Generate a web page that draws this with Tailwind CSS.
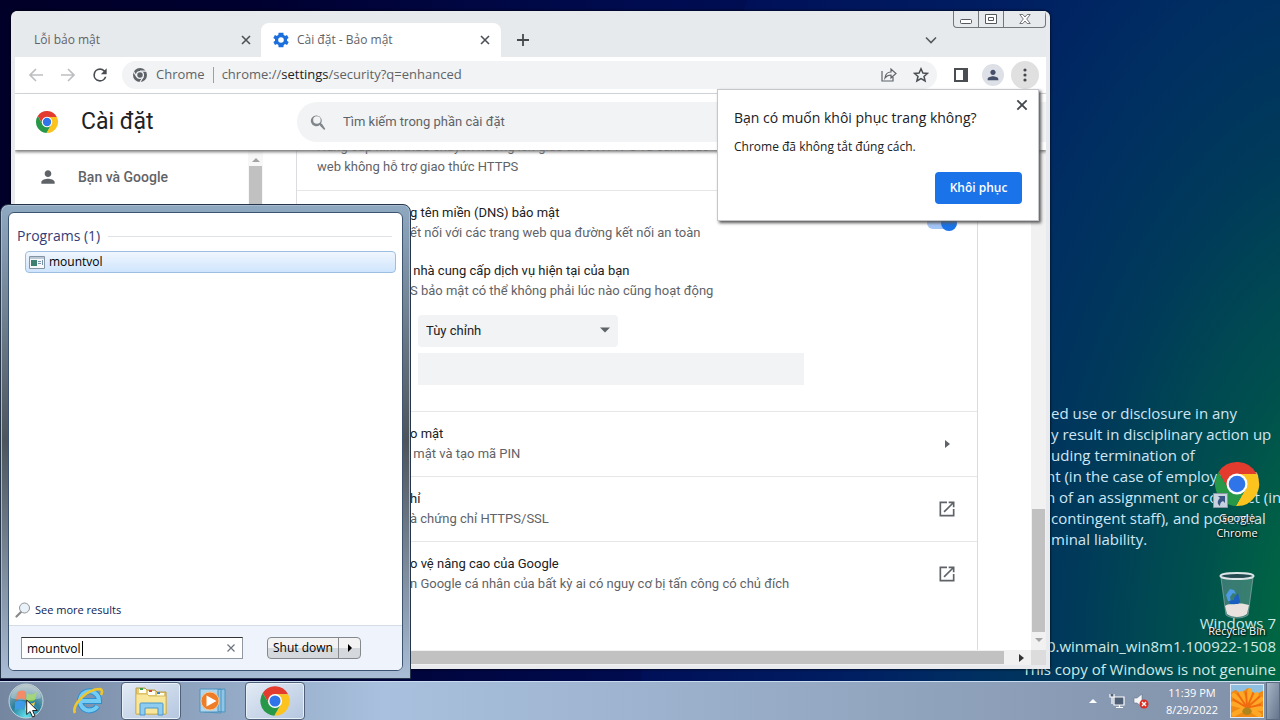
<!DOCTYPE html>
<html lang="vi">
  <head>
    <meta charset="UTF-8" />
    <meta name="viewport" content="width=device-width, initial-scale=1.0" />
    <title>Cài đặt - Bảo mật</title>
    <script src="https://cdn.jsdelivr.net/npm/@tailwindcss/browser@4"></script>
  </head>
  <body class="h-screen overflow-hidden flex flex-col font-['Open_Sans','Noto_Sans',sans-serif] text-xs text-black">
    <!-- shared icons -->
    <svg class="hidden">
      <symbol id="chrome-logo" viewBox="0 0 48 48">
        <path fill="#e33b2e" d="M24 24 15.34 29 5.54 12.03A22 22 0 0 1 43.6 14H24z" />
        <path fill="#fcc31e" d="M24 24V14H43.6A22 22 0 0 1 22.86 45.97L32.66 29z" />
        <path fill="#279847" d="M24 24 32.66 29 22.86 45.97A22 22 0 0 1 5.54 12.03L15.34 29z" />
        <circle cx="24" cy="24" r="10.5" fill="#fff" />
        <circle cx="24" cy="24" r="8.3" fill="#2f74e8" />
      </symbol>
      <symbol id="close" viewBox="0 0 12 12">
        <path d="M2 2l8 8M10 2l-8 8" fill="none" stroke="currentColor" stroke-width="1.6" />
      </symbol>
      <symbol id="person" viewBox="0 0 24 24">
        <path fill="currentColor" d="M12 12c2.21 0 4-1.79 4-4s-1.79-4-4-4-4 1.79-4 4 1.79 4 4 4zm0 2c-2.67 0-8 1.34-8 4v2h16v-2c0-2.66-5.33-4-8-4z" />
      </symbol>
      <symbol id="external" viewBox="0 0 24 24">
        <path fill="currentColor" d="M19 19H5V5h7V3H3v18h18v-9h-2v7zM14 3v2h3.59l-9.83 9.83 1.41 1.41L19 6.41V10h2V3h-7z" />
      </symbol>
    </svg>

    <main class="relative flex-1 min-h-0 overflow-hidden bg-[radial-gradient(ellipse_740px_1300px_at_108%_98%,#007038_0%,#006a40_12%,#00504e_26%,#003a5a_42%,#002e62_56%,#001e62_72%,#001058_100%,transparent_100%),linear-gradient(90deg,#000028_0%,#000030_20%,#000c50_50%,#001058_100%)]">
      <!-- wallpaper text -->
      <div class="absolute left-[1046px] top-[403px] text-[15px] leading-[21px] whitespace-nowrap text-[#cfe6f5]">
        <p class="pl-[5px]">ed use or disclosure in any</p>
        <p class="pl-[5px]">y result in disciplinary action up</p>
        <p class="pl-[5px]">uding termination of</p>
        <p>nt (in the case of employment)</p>
        <p>n of an assignment or contract (in</p>
        <p class="pl-[5px]">contingent staff), and potential</p>
        <p class="pl-[5px]">minal liability.</p>
      </div>
      <div class="absolute right-1 bottom-0 text-right text-[15px] leading-[23px] whitespace-nowrap text-[#cfeae6]">
        <p>Windows 7</p>
        <p>50.winmain_win8m1.100922-1508</p>
        <p>This copy of Windows is not genuine</p>
      </div>

      <!-- desktop icons -->
      <a href="#" class="absolute right-2 top-[460px] w-[70px] flex flex-col items-center text-center text-[11px] leading-[15px] text-white [text-shadow:1px_1px_2px_#000,0_0_2px_#000]">
        <span class="relative">
          <svg class="w-12 h-12"><use href="#chrome-logo" /></svg>
          <svg class="absolute left-0 bottom-0 w-[15px] h-[15px]" viewBox="0 0 15 15">
            <path fill="#c8d2de" stroke="#8a97a6" d="M.5.5h14v14H.5z" />
            <path fill="#3a5684" d="M5 3h7v7l-2-2c-2 1-3 2-3 5-3-2-3-5 0-8z" />
          </svg>
        </span>
        <span class="pt-[2px]">Google<br />Chrome</span>
      </a>
      <a href="#" class="absolute right-2 top-[571px] w-[70px] flex flex-col items-center text-center text-[11px] leading-[15px] whitespace-nowrap text-white [text-shadow:1px_1px_2px_#000,0_0_2px_#000]">
        <svg class="w-10 h-[52px]" viewBox="0 0 40 52">
          <path fill="#b8cdd0" fill-opacity=".3" stroke="#9fb3b5" stroke-opacity=".6" d="M4 7l5 37c5 4 17 4 22 0l5-37z" />
          <ellipse cx="20" cy="5" rx="16.5" ry="3" fill="#345" fill-opacity=".7" stroke="#dce6e8" stroke-width="2" />
          <path fill="#e9e2df" d="M8 35c4-3 7-1 11-2s9 0 13 1l-2 9c-5 4-15 4-20 0z" />
          <path fill="#4d9be6" d="M9 24l4-6 4 1 2 4-3-1-3 4 1 5-3-1z" />
          <path fill="#1c5fc2" d="M17 27l4-5 2 9-2 2h-8l-1-3 5-1z" />
        </svg>
        <span>Recycle Bin</span>
      </a>

      <!-- browser window -->
      <section class="absolute left-[11px] right-[230px] top-[11px] bottom-3 flex flex-col overflow-hidden rounded-t-md border-x-4 border-b-4 border-[#e8eaed] bg-white shadow-[0_0_3px_#000]">
        <header class="flex h-[46px] shrink-0 items-end bg-[#e7eaed] text-[#5f6368]">
          <div class="flex h-[34px] w-[246px] items-center pl-[19px] pr-[9px]">
            <span class="flex-1">Lỗi bảo mật</span>
            <button aria-label="Đóng thẻ" class="text-[#4d5156]"><svg class="w-3 h-3"><use href="#close" /></svg></button>
          </div>
          <div class="flex h-[34px] w-[240px] items-center rounded-t-lg bg-white pl-3 pr-[10px]">
            <svg class="w-4 h-4" viewBox="2 2 20 20"><path fill="#1a6fdc" fill-rule="evenodd" d="M19.4 13c0-.3.1-.6.1-1s0-.7-.1-1l2.1-1.6-2-3.5-2.5 1c-.5-.4-1.1-.7-1.7-1L15 3H9l-.4 2.9c-.6.2-1.1.6-1.7 1l-2.5-1-2 3.5L4.6 11c0 .3-.1.6-.1 1s0 .7.1 1l-2.1 1.6 2 3.5 2.5-1c.5.4 1.1.7 1.7 1L9 21h6l.4-2.9c.6-.2 1.1-.6 1.7-1l2.5 1 2-3.5zM12 15.5a3.5 3.5 0 1 1 0-7 3.5 3.5 0 0 1 0 7z" /></svg>
            <span class="flex-1 pl-2">Cài đặt - Bảo mật</span>
            <button aria-label="Đóng thẻ" class="text-[#4d5156]"><svg class="w-3 h-3"><use href="#close" /></svg></button>
          </div>
          <button aria-label="Thẻ mới" class="flex h-[34px] w-11 items-center justify-center">
            <svg class="w-3 h-3" viewBox="0 0 12 12"><path d="M6 0v12M0 6h12" stroke="#45494d" stroke-width="1.8" /></svg>
          </button>
          <div class="ml-auto flex h-full flex-col items-end">
            <div class="flex h-[17px] rounded-b border border-t-0 border-[#73777c]">
              <button aria-label="Thu nhỏ" class="flex w-[25px] items-center justify-center border-r border-[#73777c] pt-1"><svg class="w-3 h-[5px]" viewBox="0 0 12 5"><rect x=".5" y=".5" width="11" height="4" rx="1" fill="#fff" stroke="#55585c" /></svg></button>
              <button aria-label="Phóng to" class="flex w-[25px] items-center justify-center border-r border-[#73777c]"><svg class="w-3 h-[10px]" viewBox="0 0 12 10"><path d="M.5.5h11v9H.5zM3.5 3.5h5v3h-5z" fill="#fff" stroke="#55585c" /></svg></button>
              <button aria-label="Đóng" class="flex w-[41px] items-center justify-center"><svg class="w-3 h-[10px]" viewBox="0 0 12 10"><path d="M.8.5h3L6 3 8.2.5h3L7.7 5l3.5 4.5h-3L6 7 3.8 9.5h-3L4.3 5z" fill="#fff" stroke="#55585c" stroke-width=".8" /></svg></button>
            </div>
            <button aria-label="Tìm thẻ" class="mr-[109px] mt-2 w-3"><svg class="w-3 h-2" viewBox="0 0 12 8"><path d="M1 1.5l5 5 5-5" fill="none" stroke="#55595e" stroke-width="1.6" /></svg></button>
          </div>
        </header>

        <nav class="flex h-[37px] shrink-0 items-center border-b border-[#d5d8dc] pl-3 pr-[7px] text-[#5f6368]">
          <button aria-label="Quay lại"><svg class="w-[18px] h-[18px]" viewBox="0 0 18 18"><path d="M16 9H3M9 3L3 9l6 6" fill="none" stroke="#bcbec1" stroke-width="1.7" /></svg></button>
          <button aria-label="Tiến" class="ml-[14px]"><svg class="w-[18px] h-[18px]" viewBox="0 0 18 18"><path d="M2 9h13M9 3l6 6-6 6" fill="none" stroke="#bcbec1" stroke-width="1.7" /></svg></button>
          <button aria-label="Tải lại" class="ml-[13px]"><svg class="w-5 h-5" viewBox="0 0 24 24"><path fill="#4a4e52" d="M17.65 6.35A7.95 7.95 0 0 0 12 4a8 8 0 1 0 7.73 10h-2.08A6 6 0 1 1 12 6c1.66 0 3.14.69 4.22 1.78L13 11h7V4z" /></svg></button>
          <div class="ml-3 flex h-7 flex-1 items-center rounded-full bg-[#f1f3f4] pl-[10px] pr-2 text-[13px]">
            <svg class="mr-2 w-4 h-4" viewBox="0 0 16 16">
              <circle cx="8" cy="8" r="7" fill="#5f6368" />
              <circle cx="8" cy="8" r="3.4" fill="#5f6368" stroke="#f1f3f4" stroke-width="1.3" />
              <path d="M8 4.2h6.5M4.8 10L1.5 4.5M11.2 10L8 15" stroke="#f1f3f4" stroke-width="1.2" />
            </svg>
            <span>Chrome</span>
            <span class="mx-2 h-4 w-px bg-[#9aa0a6]"></span>
            <a href="#" class="flex-1">chrome://<span class="text-[#202124]">settings</span>/security?q=enhanced</a>
            <button aria-label="Chia sẻ"><svg class="w-4 h-4" viewBox="0 0 16 16"><path d="M1 4v10h11v-4M4 11c.5-4 3-6 6-6V2l5 4.5-5 4.5V8c-3 0-4.5 1-6 3z" fill="none" stroke="#5f6368" stroke-width="1.2" /></svg></button>
            <button aria-label="Đánh dấu trang" class="ml-4"><svg class="w-4 h-4" viewBox="0 0 16 16"><path d="M8 1.8l1.9 4.2 4.6.4-3.5 3 1.1 4.5L8 11.5l-4.1 2.4L5 9.4l-3.5-3L6.1 6z" fill="none" stroke="#4a4e52" stroke-width="1.5" /></svg></button>
          </div>
          <button aria-label="Bảng điều khiển bên" class="ml-[17px]"><svg class="w-[14px] h-[14px]" viewBox="0 0 14 14"><path fill="#4a4e52" fill-rule="evenodd" d="M0 0h14v14H0zM2 2v10h7V2z" /></svg></button>
          <button aria-label="Hồ sơ" class="ml-[14px] flex h-[22px] w-[22px] items-center justify-center rounded-full bg-[#dde0e6] text-[#45506a]"><svg class="w-4 h-4"><use href="#person" /></svg></button>
          <button aria-label="Trình đơn" class="ml-[7px] flex h-7 w-7 items-center justify-center rounded-full bg-[#e0e0e0]"><svg class="w-1 h-[14px]" viewBox="0 0 4 14"><g fill="#45494d"><circle cx="2" cy="2" r="1.6" /><circle cx="2" cy="7" r="1.6" /><circle cx="2" cy="12" r="1.6" /></g></svg></button>
        </nav>

        <div class="relative z-10 flex h-14 shrink-0 items-center bg-white pl-5 shadow-[0_2px_3px_#777] font-[Roboto,sans-serif]">
          <svg class="w-6 h-6"><use href="#chrome-logo" /></svg>
          <h1 class="w-[238px] shrink-0 pl-[22px] text-[23px] text-[#202124]">Cài đặt</h1>
          <label class="flex h-10 flex-1 items-center rounded-l-full bg-[#f1f3f4] pl-3">
            <svg class="w-5 h-5" viewBox="0 0 24 24"><path fill="#80868b" d="M15.5 14h-.79l-.28-.27A6.5 6.5 0 1 0 13 15.5l.27.28v.79l5 4.99L19.49 20zm-6 0a4.5 4.5 0 1 1 0-9 4.5 4.5 0 0 1 0 9z" /></svg>
            <input type="text" aria-label="Tìm kiếm" placeholder="Tìm kiếm trong phần cài đặt" class="ml-[14px] flex-1 text-[13px] outline-none placeholder:text-[#5f6368]" />
          </label>
        </div>

        <div class="flex min-h-0 flex-1 font-[Roboto,sans-serif] text-[13px] leading-5 text-[#202124]">
          <aside class="flex w-[248px] shrink-0">
            <a href="#" class="flex h-[53px] flex-1 items-center pl-[23px] text-sm font-medium text-[#5f6368]">
              <svg class="mr-5 w-5 h-5"><use href="#person" /></svg>Bạn và Google
            </a>
            <div class="flex w-[15px] flex-col items-center bg-[#f7f7f7] pt-1">
              <svg class="w-2 h-3" viewBox="0 0 8 12"><path fill="#a3a3a3" d="M0 8h8L4 4z" /></svg>
              <div class="w-[13px] flex-1 bg-[#c1c1c1]"></div>
            </div>
          </aside>

          <div class="flex min-w-0 flex-1 flex-col">
            <div class="flex min-h-0 flex-1">
              <div class="ml-[33px] flex-1 overflow-hidden border-x border-[#dadce0]">
                <div class="-mt-4 flex h-[57px] flex-col justify-end border-b border-[#e4e6e8] px-5 pb-[13px] text-[#5f6368]">
                  <p>Nâng cấp hình thức chuyển hướng lên giao thức HTTPS và cảnh báo</p>
                  <p>web không hỗ trợ giao thức HTTPS</p>
                </div>
                <div class="h-[221px] border-b border-[#e4e6e8] pl-[113px] pr-5 pt-3">
                  <div class="flex items-center justify-between">
                    <div class="whitespace-nowrap">
                      <p>g tên miền (DNS) bảo mật</p>
                      <p class="text-[#5f6368]">ết nối với các trang web qua đường kết nối an toàn</p>
                    </div>
                    <label class="relative h-3 w-[30px] rounded-full bg-[#a3c5f6]">
                      <input type="checkbox" checked aria-label="DNS bảo mật" class="peer sr-only" />
                      <span class="absolute -top-0.5 right-0 h-4 w-4 rounded-full bg-[#1a73e8]"></span>
                    </label>
                  </div>
                  <div class="mt-[18px]">
                    <p class="whitespace-pre"> nhà cung cấp dịch vụ hiện tại của bạn</p>
                    <p class="text-[#5f6368]">S bảo mật có thể không phải lúc nào cũng hoạt động</p>
                  </div>
                  <div class="relative mt-[14px] ml-2 w-[200px]">
                    <select aria-label="Nhà cung cấp" class="h-8 w-full appearance-none rounded bg-[#f1f3f4] px-2"><option>Tùy chỉnh</option></select>
                    <svg class="pointer-events-none absolute right-2 top-3 w-[10px] h-[6px]" viewBox="0 0 10 6"><path fill="#5f6368" d="M0 .5h10l-5 5z" /></svg>
                  </div>
                  <input type="text" aria-label="Nhà cung cấp tùy chỉnh" class="mt-[6px] ml-2 h-8 w-[386px] bg-[#f1f3f4] px-2" />
                </div>
                <div class="flex h-[65px] items-center justify-between border-b border-[#e4e6e8] pl-[113px] pr-[27px]">
                  <div><p>o mật</p><p class="whitespace-pre text-[#5f6368]"> mật và tạo mã PIN</p></div>
                  <svg class="w-[5px] h-2" viewBox="0 0 5 8"><path fill="#5f6368" d="M0 0l5 4-5 4z" /></svg>
                </div>
                <div class="flex h-[65px] items-center justify-between border-b border-[#e4e6e8] pl-[113px] pr-5">
                  <div><p>hỉ</p><p class="text-[#5f6368]">à chứng chỉ HTTPS/SSL</p></div>
                  <a href="#" aria-label="Mở" class="text-[#5f6368]"><svg class="w-5 h-5"><use href="#external" /></svg></a>
                </div>
                <div class="flex h-16 items-center justify-between pl-[113px] pr-5">
                  <div><p>o vệ nâng cao của Google</p><p class="text-[#5f6368]">n Google cá nhân của bất kỳ ai có nguy cơ bị tấn công có chủ đích</p></div>
                  <a href="#" aria-label="Mở" class="text-[#5f6368]"><svg class="w-5 h-5"><use href="#external" /></svg></a>
                </div>
              </div>
              <div class="ml-[53px] flex w-[15px] flex-col items-center justify-end bg-[#f1f1f1]">
                <div class="h-[123px] w-[13px] bg-[#c1c1c1]"></div>
                <svg class="w-2 h-[18px]" viewBox="0 0 8 18"><path fill="#a3a3a3" d="M0 6h8l-4 4z" /></svg>
              </div>
            </div>
            <div class="flex h-[15px] shrink-0 items-center bg-[#f1f1f1]">
              <div class="h-[13px] flex-1 bg-[#c1c1c1]"></div>
              <svg class="ml-[15px] mr-[7px] w-[5px] h-2" viewBox="0 0 5 8"><path fill="#333" d="M0 0l5 4-5 4z" /></svg>
              <div class="h-full w-[15px] bg-[#dcdcdc]"></div>
            </div>
          </div>
        </div>
      </section>

      <!-- restore bubble -->
      <section role="dialog" class="absolute z-20 right-[241px] top-[89px] w-[322px] h-[132px] border border-[#c5c7ca] bg-white p-4 text-[#202124] shadow-[2px_2px_3px_#555]">
        <button aria-label="Đóng" class="absolute right-[9px] top-2 text-[#45494d]"><svg class="w-[14px] h-[14px]"><use href="#close" /></svg></button>
        <h2 class="text-sm leading-6">Bạn có muốn khôi phục trang không?</h2>
        <p class="mt-[5px] leading-6">Chrome đã không tắt đúng cách.</p>
        <div class="mt-[13px] flex justify-end"><button class="h-8 w-[87px] rounded bg-[#1a73e8] font-semibold text-white">Khôi phục</button></div>
      </section>

      <!-- start menu -->
      <section class="absolute z-20 left-0 bottom-[2px] flex h-[475px] w-[411px] flex-col rounded-t-lg border border-[#26364a] bg-linear-to-b from-[#8fa9c2] via-[#4d545b] via-50% to-[#a9bdd6] p-[7px] shadow-[inset_0_0_0_1px_#a8bbcf]">
        <div class="flex flex-1 flex-col overflow-hidden rounded-md border border-[#3c5470] bg-white">
          <div class="flex items-center gap-2 px-2 pr-[10px] pt-[11px] text-sm leading-6 text-[#333d78]">
            <h2>Programs (1)</h2>
            <span class="h-px flex-1 bg-[#dfe3e8]"></span>
          </div>
          <a href="#" class="ml-4 mr-[6px] mt-[3px] flex h-[22px] items-center rounded-sm border border-[#9dbfdf] bg-linear-to-b from-[#f0f6fd] to-[#cfe5fd] pl-[3px]">
            <svg class="mr-1 w-4 h-[13px]" viewBox="0 0 16 13">
              <path fill="#f6f9fa" stroke="#8594a3" d="M.5.5h15v12H.5z" />
              <path fill="#b9c9d6" d="M1 1h14v2H1z" />
              <path fill="#3b8070" d="M2 4h6v6H2z" />
              <path stroke="#7890a8" d="M9 5.5h3M9 7.5h3M13.5 4v5" />
            </svg>mountvol
          </a>
          <a href="#" class="mt-auto flex h-[30px] items-center pl-[6px] text-[11px] text-[#0c1c56]">
            <svg class="mr-1 w-4 h-4" viewBox="0 0 16 16"><path d="M6 10l-4.5 4.5" stroke="#8a8a8a" stroke-width="2.2" stroke-linecap="round" /><circle cx="9.5" cy="6" r="5" fill="#e9f2f8" stroke="#909496" /></svg>See more results
          </a>
          <div class="flex h-[45px] shrink-0 items-center border-t border-[#d5dce8] bg-[#eff3fb] pl-3">
            <div class="relative w-[222px]">
              <input type="text" aria-label="Search" value="mountvol" class="h-[22px] w-full border border-[#8f98a3] border-t-[#333] bg-white pl-[5px] outline-none" />
              <span class="absolute left-[61px] top-1 h-[15px] w-px bg-black"></span>
              <button aria-label="Clear" class="absolute right-2 top-[7px] text-[#6c7480]"><svg class="w-2 h-2" viewBox="0 0 8 8"><path d="M.5.5l7 7M7.5.5l-7 7" stroke="currentColor" stroke-width="1.2" /></svg></button>
            </div>
            <div class="ml-6 flex h-[22px] rounded-sm border border-[#85898e] bg-linear-to-b from-[#f3f3f4] from-50% to-[#d5d8dc] to-50%">
              <button class="w-[71px] border-r border-[#85898e]">Shut down</button>
              <button aria-label="More" class="flex w-[21px] items-center justify-center"><svg class="w-1 h-2" viewBox="0 0 4 8"><path d="M0 0l4 4-4 4z" /></svg></button>
            </div>
          </div>
        </div>
      </section>
    </main>

    <!-- taskbar -->
    <footer class="flex h-[39px] shrink-0 items-center border-t border-[#c9dbee] bg-linear-to-r from-[#7486a0] from-0% via-[#a9c1de] via-30% to-[#8090a8]">
      <button aria-label="Start" class="relative ml-2 h-9 w-9">
        <svg class="w-9 h-9" viewBox="0 0 36 36">
          <defs>
            <radialGradient id="orb" cx=".5" cy=".95" r=".9"><stop offset="0" stop-color="#5fe3ee" /><stop offset=".5" stop-color="#2a7f9f" /><stop offset="1" stop-color="#9fb3b8" /></radialGradient>
          </defs>
          <circle cx="18" cy="18" r="17" fill="url(#orb)" stroke="#c3d6dc" />
          <path fill="#ee5a25" d="M9 10c3-3 6-3 9-1l-1 8c-3-2-6-2-9 1z" />
          <path fill="#7dc242" d="M19 10c3 2 6 2 10-1l-2 8c-3 2-6 2-9 0z" />
          <path fill="#3f9be8" d="M7 19c3-2 6-2 10 0l-1 8c-3-2-6-2-9 1z" />
          <path fill="#f5cf45" d="M18 19c3 2 6 2 9 0l-2 8c-3 2-6 2-8 0z" />
          <path fill="#fff" fill-opacity=".3" d="M3 15a15 13 0 0 1 30 0c-9 3-21 3-30 0z" />
        </svg>
        <svg class="absolute left-[18px] top-4 w-3 h-[19px]" viewBox="0 0 12 19"><path fill="#fff" stroke="#222" d="M.7 1v14.5l3.4-3 2.4 5.5 2.5-1-2.4-5.5h4.7z" /></svg>
      </button>
      <button aria-label="Internet Explorer" class="ml-7 w-[34px]">
        <svg class="w-8 h-8" viewBox="0 0 32 32">
          <path d="M25.5 21a9.5 9.5 0 1 1 1.5-5H9" fill="none" stroke="#2d8fd0" stroke-width="6" />
          <path d="M25.5 21a9.5 9.5 0 1 1 1.5-5H9" fill="none" stroke="#75ccf3" stroke-width="4" />
          <path d="M3 28C-1 21 14 4 28 4c3 1 2 4 1 6" fill="none" stroke="#efc62c" stroke-width="2.6" />
        </svg>
      </button>
      <button aria-label="Explorer" class="ml-[15px] flex h-[38px] w-[60px] items-center justify-center rounded border border-[#4f6078] bg-linear-to-br from-[#e3ebf5] to-[#b4c6df] shadow-[inset_0_0_0_1px_#e8f0f8]">
        <svg class="w-8 h-[30px]" viewBox="0 0 32 30">
          <path fill="#e8cb70" stroke="#b79a45" d="M1 2h9l2 2h8l2 2h9v22H1z" />
          <path fill="#fffef2" d="M4 3h7v4H4zM13 5h7v4h-7zM22 7h7v3h-7z" />
          <path fill="#3da04a" d="M5 2h3v2H5z" /><path fill="#d64a3c" d="M14 4h3v2h-3z" /><path fill="#3b84d0" d="M22 6h3v2h-3z" />
          <path fill="#f8e79b" stroke="#d5b95c" d="M1 8h11l2 2h17v18H1z" />
          <path fill="#8fcdf0" stroke="#4a96c8" d="M5 18c0-1 1-1 2-1h19c1 0 2 0 2 1v11h-5v-7H10v7H5z" />
        </svg>
      </button>
      <button aria-label="Media Player" class="ml-[17px] w-[30px]">
        <svg class="w-[30px] h-[30px]" viewBox="0 0 30 30">
          <path fill="#8fc5e6" stroke="#4f93be" d="M10 4l17-1v23l-17-1zM6 4l17-1v24L6 26z" />
          <path fill="#aed7ef" stroke="#4f93be" d="M2 3h18v23H2z" />
          <circle cx="12" cy="15" r="9" fill="#ef7d27" stroke="#f9c48e" />
          <path fill="#fff" d="M8.5 9.5l10 5.5-10 5.5z" />
        </svg>
      </button>
      <button aria-label="Chrome" class="ml-[17px] flex h-[38px] w-[60px] items-center justify-center rounded border border-[#4f6078] bg-linear-to-br from-[#e3ebf5] to-[#b4c6df] shadow-[inset_0_0_0_1px_#e8f0f8]">
        <svg class="w-8 h-8"><use href="#chrome-logo" /></svg>
      </button>

      <div class="ml-auto flex h-full items-center text-white">
        <button aria-label="Show hidden icons"><svg class="w-2 h-1" viewBox="0 0 8 4"><path fill="#fff" d="M0 4l4-4 4 4z" /></svg></button>
        <svg class="ml-3 w-4 h-4" viewBox="0 0 16 16"><path fill="#4f5f75" stroke="#fff" stroke-width="1.2" d="M5 4h10v8H5zM7 14.5h7M10.5 12v2M1 1v3h4V1M3 4v7" /></svg>
        <svg class="ml-2 w-4 h-4" viewBox="0 0 16 16"><path fill="#f4f6f8" stroke="#68778c" stroke-width=".6" d="M1 5h3l5-4v13l-5-4H1z" /><circle cx="11" cy="11" r="4.5" fill="#d93025" /><path stroke="#fff" stroke-width="1.4" d="M9 9l4 4M13 9l-4 4" /></svg>
        <div class="ml-4 w-[54px] text-center text-[11px] leading-[17px] whitespace-nowrap"><p>11:39 PM</p><p>8/29/2022</p></div>
        <svg class="ml-[11px] w-[34px] h-[34px] border border-[#dfeaf5]" viewBox="0 0 34 34">
          <path fill="#f08a14" d="M0 0h34v34H0z" />
          <path fill="#8fbfe0" d="M0 0h34v6l-8 4-8-7-8 6-5-4-5 3z" />
          <g stroke="#ffa726" stroke-width="5" stroke-linecap="round"><path d="M17 24L3 11M17 24L11 9M17 24L20 6M17 24l10-14M17 24l15-9M17 24L2 20M17 24l15 1M17 24L3 31M17 24l13 8" /></g>
          <g stroke="#f06a10" stroke-width="2"><path d="M17 24L7 9M17 24L16 7M17 24L24 8M17 24L31 12M17 24L2 15M17 24l15-3" /></g>
          <ellipse cx="17" cy="28" rx="5" ry="4" fill="#b0841c" />
        </svg>
        <button aria-label="Show desktop" class="ml-[2px] h-full w-[14px] border border-[#5c6b80] bg-linear-to-br from-[#a9b6c8] to-[#66758c]"></button>
      </div>
    </footer>
  </body>
</html>
